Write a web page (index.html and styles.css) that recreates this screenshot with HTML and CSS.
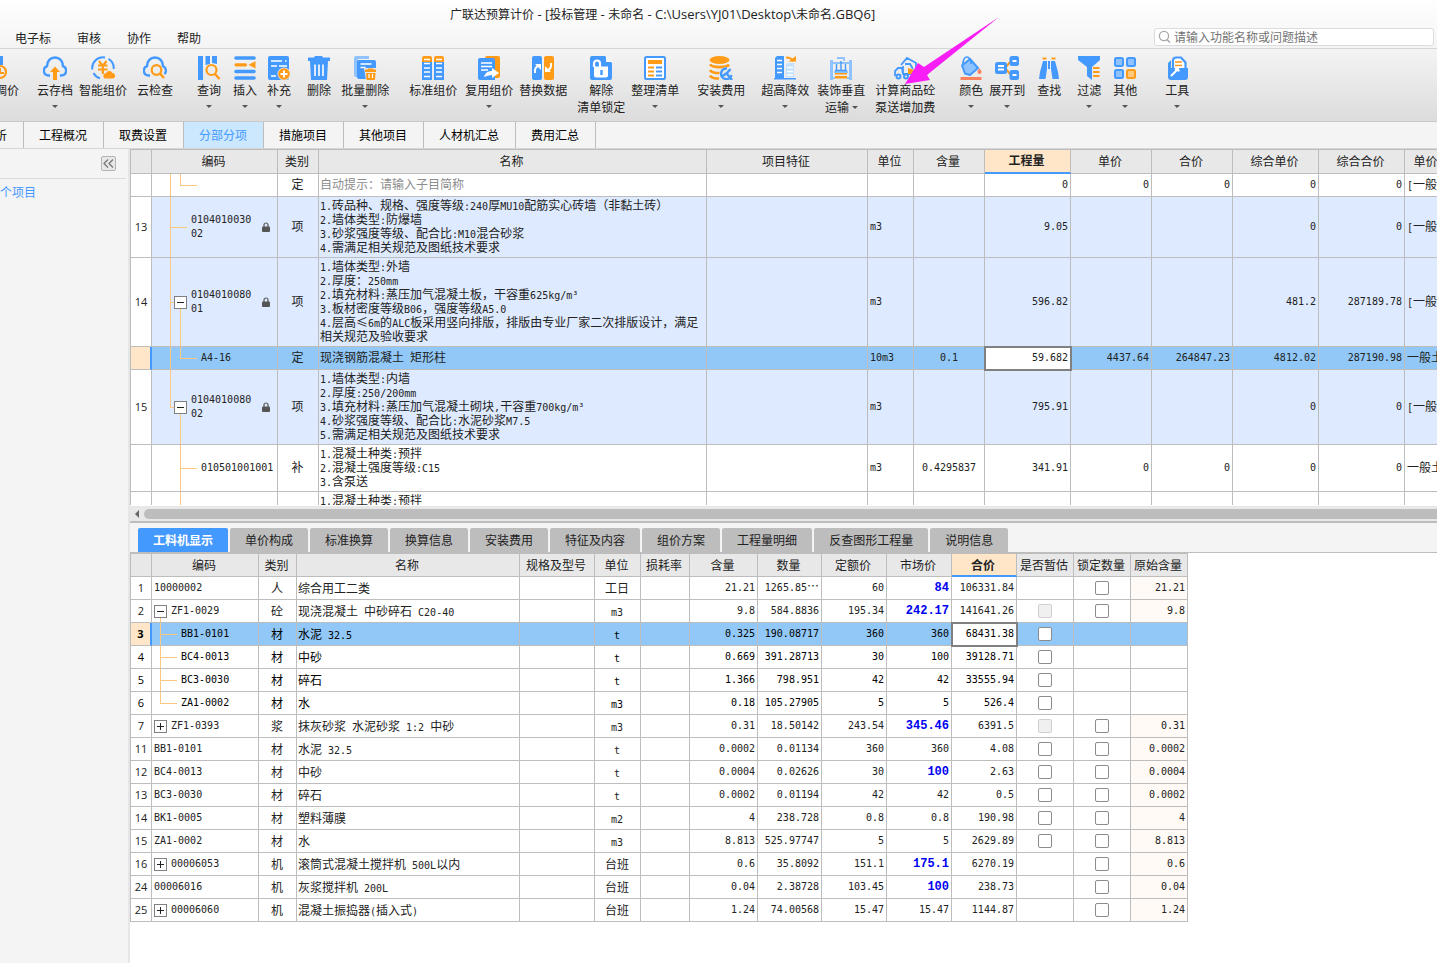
FILE: index.html
```html
<!DOCTYPE html>
<html lang="zh-CN">
<head>
<meta charset="utf-8">
<title>广联达预算计价</title>
<link rel="stylesheet" href="styles.css">
</head>
<body>
<header class="top">
  <h1 class="title">广联达预算计价<span> - [</span>投标管理<span> - </span>未命名<span> - C:\Users\YJ01\Desktop\</span>未命名<span>.GBQ6]</span></h1>
  <div class="menubar">
    <nav class="menu">
      <button>电子标</button><button>审核</button><button>协作</button><button>帮助</button>
    </nav>
    <label class="search">
      <svg width="14" height="14" viewBox="0 0 14 14"><circle cx="6" cy="6" r="4.6" fill="none" stroke="#a8a8a8" stroke-width="1.3"/><path d="M9 9.5 12 12.5" stroke="#a8a8a8" stroke-width="1.6"/></svg>
      <input type="text" aria-label="搜索" placeholder="请输入功能名称或问题描述">
    </label>
  </div>
</header>

<div class="toolbar">
  <button class="tool tool-cut"><svg viewBox="0 0 24 24"><path class="fb" d="M2 0h18v9H2zM2 11h12v12H2z"/><circle class="so" cx="17" cy="16" r="6" stroke-width="2.2"/><path class="so" d="M17 12v5h4" stroke-width="2"/></svg><span>统一调价</span></button>
  <button class="tool g18"><svg viewBox="0 0 24 24"><path class="sb" d="M7 19.500H5.500A4.800 4.800 0 0 1 4 10.200C4 5 7.500 1.500 12 1.500S20 5 20 10.200A4.800 4.800 0 0 1 18.500 19.500H17" stroke-width="2.400"/><path class="fo" d="M12 10.500l5 5.500h-3v8h-4v-8H7z"/></svg><span>云存档</span><i class="drop"></i></button>
  <button class="tool g6"><svg viewBox="0 0 24 24"><path class="sb" d="M9 22.300A10.800 10.800 0 0 1 2.500 17M1.300 13.500A10.800 10.800 0 0 1 14 1.500M17.500 2.800A10.800 10.800 0 0 1 22.700 13" stroke-width="2"/><path class="so" d="M8 5l3.800 5L15.500 5M7 9.500h9.500M7 13.500h9.500M11.800 9.500V18" stroke-width="2.200"/><path class="fo" d="M15 22.500a2.600 2.600 0 0 1 0-5.200 3.600 3.600 0 0 1 6.500-.3 2.800 2.800 0 0 1 .5 5.500z"/></svg><span>智能组价</span></button>
  <button class="tool g10"><svg viewBox="0 0 24 24"><path class="sb" d="M7 19.500H5.500A4.800 4.800 0 0 1 4 10.200C4 5 7.500 1.500 12 1.500S20 5 20 10.200A4.800 4.800 0 0 1 21.500 18" stroke-width="2.400"/><circle class="so" cx="13.500" cy="14" r="4.800" stroke-width="2.200"/><path class="so" d="M17 17.500l4 4.500" stroke-width="2.600"/></svg><span>云检查</span></button>
  <button class="tool g24"><svg viewBox="0 0 24 24"><path class="fb" d="M1 0h5v24H1zM8.500 0h4.500v8L8.500 9zM15 0h5v8l-5-1z"/><circle class="so" cx="14.500" cy="14" r="5" stroke-width="2.200"/><path class="so" d="M18 18l4.500 5" stroke-width="2.600"/></svg><span>查询</span><i class="drop"></i></button>
  <button class="tool g12"><svg viewBox="0 0 24 24"><path class="sb" stroke-linecap="round" d="M3 2h18M3 15.500h18M3 22h18" stroke-width="3.600"/><path class="so" stroke-linecap="round" d="M3 8.800h9.500" stroke-width="3.200"/><path class="fo" d="M15.500 8.800l7-3.600v7.200z"/></svg><span>插入</span><i class="drop"></i></button>
  <button class="tool g10"><svg viewBox="0 0 24 24"><rect class="fb" x="1" width="21" height="24" rx="2"/><path class="sw" d="M4 5h11M18 5h1.500M4 10h6M12 10h8M4 20h5" stroke-width="1.500"/><circle cx="17" cy="18" r="6.500" fill="#e8e8e8"/><circle class="fo" cx="17" cy="18" r="5.800"/><path class="sw" d="M17 14.500v7M13.500 18h7" stroke-width="2"/></svg><span>补充</span><i class="drop"></i></button>
  <button class="tool g16"><svg viewBox="0 0 24 24"><path class="fb" d="M8 0h7l1 1.500h7V5H1V1.500h6zM3 5h18l-1 19H4z"/><path class="sw" d="M8 8.500V20M12 8.500V20M16 8.500V20" stroke-width="1.600"/></svg><span>删除</span></button>
  <button class="tool g10"><svg viewBox="0 0 24 24"><path d="M1 2a2 2 0 0 1 2-2h13v3H5v18H3a2 2 0 0 1-2-2z" fill="#8fc3ff"/><rect class="fb" x="4" y="4" width="19" height="19" rx="2"/><path class="sw" d="M7.500 8h11M7.500 11.500h5" stroke-width="1.500"/><path fill="#eaeaea" d="M11 12h13v12H13z"/><path class="fo" d="M15 12.500h5l.5 1H23V16H12v-2.500h2.500zM13 17h9.500L22 24h-8.500z"/><path class="sw" d="M16 18v4M19.500 18v4" stroke-width="1.200"/></svg><span>批量删除</span><i class="drop"></i></button>
  <button class="tool g20"><svg viewBox="0 0 24 24"><path class="fb" d="M1 5h10v19H1zM13 5h10v19H13z"/><path class="fo" d="M1 2a2 2 0 0 1 2-2h6a2 2 0 0 1 2 2v4H1zM13 2a2 2 0 0 1 2-2h6a2 2 0 0 1 2 2v4H13z"/><path class="sw" d="M3 3.500h6M3 7.500h6M3 12h6M3 16h6M3 20.500h6M15 3.500h6M15 7.500h6M15 12h6M15 16h6M15 20.500h6" stroke-width="1.500"/></svg><span>标准组价</span></button>
  <button class="tool g8"><svg viewBox="0 0 24 24"><rect class="fo" x="8" width="15" height="22" rx="2"/><path class="fb" d="M1 4a2 2 0 0 1 2-2h13a2 2 0 0 1 2 2v20H3a2 2 0 0 1-2-2z"/><path class="sw" d="M4 7h11M4 10.500h11M4 14h7" stroke-width="1.500"/><path fill="#fff" d="M7 21c1-4 4-6 8-6v-3l7 5-7 5v-3c-3 0-5 1-8 2z"/></svg><span>复用组价</span><i class="drop"></i></button>
  <button class="tool g6"><svg viewBox="0 0 24 24"><rect class="fb" x="1" width="10" height="24" rx="2"/><rect class="fo" x="13" width="10" height="24" rx="2"/><path class="sw" d="M4 17c-.5-4 .5-6 3-7M20 7c.5 4-.5 6-3 7" stroke-width="2"/><path fill="#fff" d="M4 8h6v6zM20 16h-6v-6z"/></svg><span>替换数据</span></button>
  <button class="tool g10"><svg viewBox="0 0 24 24"><path class="fb" d="M1 2a2 2 0 0 1 2-2h13l7 7v15a2 2 0 0 1-2 2H3a2 2 0 0 1-2-2z"/><path fill="#f8f8f8" d="M17 0v6h6z"/><path class="sw" d="M5 11V7.500a3 3 0 0 1 6 0V11" stroke-width="2.200"/><path fill="#fff" d="M5 10.500h14v9a2 2 0 0 1-2 2H7a2 2 0 0 1-2-2z"/><path class="sb" d="M12.500 14v5" stroke-width="2.400"/></svg><span>解除<br>清单锁定</span></button>
  <button class="tool g6"><svg viewBox="0 0 24 24"><rect x="2" y="1" width="20" height="22" rx="1.500" fill="#fff" stroke="#4499ff" stroke-width="2"/><path class="fo" d="M5 4h14v4H5z"/><path class="so" d="M5 11.500h6M5 15.500h6M5 19.500h6" stroke-width="2"/><path class="sb" d="M13 11.500h6M13 15.500h6M13 19.500h6" stroke-width="2"/></svg><span>整理清单</span><i class="drop"></i></button>
  <button class="tool g18"><svg viewBox="0 0 24 24"><ellipse class="fo" cx="10.500" cy="4" rx="10" ry="4"/><path class="so" d="M1 8.500c2 3.500 17 3.500 19 0M1 14c1 2 5 3 10 3M1 19.500c1 2 4 3 9 3" stroke-width="2.600"/><circle cx="17" cy="18" r="6.800" fill="#e8e8e8"/><path class="sb" d="M18 12.500a5.300 5.300 0 1 0 4.500 6.500M12 21l6-4 3.500-4" stroke-width="2.400"/><path class="sb" d="M18 18l5 6" stroke-width="2.400"/></svg><span>安装费用</span><i class="drop"></i></button>
  <button class="tool g16"><svg viewBox="0 0 24 24"><path class="fb" d="M2 2l2-2h7v22h12v1.500H1V22h1z"/><path class="sw" d="M4 4.500h5M4 8.500h5M4 12.500h5M4 16.500h5" stroke-width="1.400"/><path fill="#c4e2ff" d="M13 9l2-2h6v14h-8z"/><path class="sw" d="M14 11.500h6M14 15.500h6M14 19h6" stroke-width="1.300"/><path class="so" d="M13 1.500c4 0 6 1 7 4" stroke-width="2.200"/><path class="fo" d="M15.500 5.500H23V0z"/></svg><span>超高降效</span><i class="drop"></i></button>
  <button class="tool g8"><svg viewBox="0 0 24 24"><path d="M2.500 24V4M21.500 24V4" fill="none" stroke="#8fc3ff" stroke-width="3"/><path d="M8 2h7v3M2 7h20M2 22h4M18 22h4M5 16h14" fill="none" stroke="#8fc3ff" stroke-width="1.800"/><path class="sb" d="M6 14.500h12M7.500 8v7M12 5v10M16.500 8v7" stroke-width="1.400"/><path class="fo" d="M6 17h12v1.500H6zM6 20h12v2.500H6z"/></svg><span>装饰垂直<br>运输 <i class="drop inline"></i></span></button>
  <button class="tool g10"><svg viewBox="0 0 24 24"><path class="sb" d="M2 20v-5l3-3h4l1 6M8 9l6-7 9 5v10M10 10v8h12M12 8h5l3 5" stroke-width="1.800"/><circle class="sb" cx="5.500" cy="20.500" r="2" stroke-width="2"/><circle class="sb" cx="13" cy="20.500" r="2" stroke-width="2"/><path class="fo" d="M15 12l6 2v4h-6z"/></svg><span>计算商品砼<br>泵送增加费</span></button>
  <button class="tool g24"><svg viewBox="0 0 24 24"><path d="M3 9.500l8-6.500 8 9-8 7-5-1.500z" fill="#8fc3ff" stroke="#4499ff" stroke-width="2" stroke-linejoin="round"/><path class="sb" d="M4 8c0-5 2-7 4-7s4 3 4 7" stroke-width="1.700"/><path fill="#fa8160" d="M20.500 12l2 4h-4zM1.500 21h21v3h-21z"/><circle cx="20.500" cy="16" r="2" fill="#fa8160"/></svg><span>颜色</span><i class="drop"></i></button>
  <button class="tool g6"><svg viewBox="0 0 24 24"><path class="so" d="M10 12l6-7M10 12l6 7" stroke-width="2"/><rect class="fb" x="0" y="6" width="12" height="12" rx="2.500"/><rect class="fb" x="14.500" width="9.500" height="10" rx="2.500"/><rect class="fb" x="14.500" y="14" width="9.500" height="10" rx="2.500"/><path class="sw" d="M3 10h6M3 13.500h6M17.500 5h4M17.500 19h4" stroke-width="1.900"/></svg><span>展开到</span><i class="drop"></i></button>
  <button class="tool g12"><svg viewBox="0 0 24 24"><path class="fb" d="M6 5h4v8l-1.500 10H2l1-7zM14 5h4l3 11 1 7h-6.500L14 13zM11 5h2v8h-2z"/><path class="so" d="M5.500 2.500h4M14.500 2.500h4" stroke-width="2.200"/></svg><span>查找</span></button>
  <button class="tool g16"><svg viewBox="0 0 24 24"><path class="fb" d="M1 0h22v4l-8 7v13l-5-4v-9L1 4z"/><path class="so" d="M16 12h6.500M16 16h6.500M16 20h6.500" stroke-width="1.800"/></svg><span>过滤</span><i class="drop"></i></button>
  <button class="tool g12"><svg viewBox="0 0 24 24"><g fill="#8fc3ff" stroke="#4499ff" stroke-width="2"><rect x="2" y="2" width="8" height="8" rx="1.500"/><rect x="14" y="2" width="8" height="8" rx="1.500"/><rect x="2" y="14" width="8" height="8" rx="1.500"/></g><rect x="14" y="14" width="8" height="8" rx="1.500" fill="#ffca80" stroke="#ff9b17" stroke-width="2"/></svg><span>其他</span><i class="drop"></i></button>
  <button class="tool g28"><svg viewBox="0 0 24 24"><path d="M8 18V4.500a3 3 0 0 1 3-3h5l4.500 5V15z" fill="#fff" stroke="#4499ff" stroke-width="2.200"/><path class="fb" d="M3 7l3-3v8h17v9a3 3 0 0 1-3 3H6a3 3 0 0 1-3-3z"/><path class="so" d="M10 6h7M10 9.500h7" stroke-width="1.600"/><path class="sw" d="M6 20l5-5c-1-2 1-4 2.500-3.500l-1 2.500 2 1" stroke-width="2"/></svg><span>工具</span><i class="drop"></i></button>
</div>
<svg class="pointer" width="96" height="68" viewBox="0 0 96 68"><path d="M95 0 20 50 14 46 1 67 26 63 23 58z" fill="#f91ef5"/></svg>

<nav class="tabs">
  <button class="tab-cut">造价分析</button><button>工程概况</button><button>取费设置</button><button class="on">分部分项</button><button>措施项目</button><button>其他项目</button><button>人材机汇总</button><button>费用汇总</button>
</nav>

<div class="body">
<aside class="side">
  <div class="side-head"><button class="fold" aria-label="收起"><svg width="11" height="9" viewBox="0 0 11 9"><path d="M5 .5 1 4.500l4 4M10 .5 6 4.500l4 4" fill="none" stroke="#777" stroke-width="1.300"/></svg></button></div>
  <a class="node" href="#">整个项目</a>
</aside>
<main class="main">
<div class="pane">
<table class="grid list">
<colgroup><col class="w21"><col class="w126"><col class="w41"><col class="w388"><col class="w161"><col class="w46"><col class="w71"><col class="w86"><col class="w81"><col class="w81"><col class="w86"><col class="w86"><col class="w92"></colgroup>
<thead><tr><th></th><th>编码</th><th>类别</th><th>名称</th><th>项目特征</th><th>单位</th><th>含量</th><th class="cur">工程量</th><th>单价</th><th>合价</th><th>综合单价</th><th>综合合价</th><th>单价构成文件</th></tr></thead>
<tbody>
<tr><td></td><td class="tr-a"></td><td>定</td><td class="hint">自动提示：请输入子目简称</td><td></td><td></td><td></td><td>0</td><td>0</td><td>0</td><td>0</td><td>0</td><td><b>[</b>一般土建工程<b>]</b></td></tr>
<tr class="item"><td>13</td><td class="tr-b"><div class="code deep"><span>010401003002</span><svg class="lock" viewBox="0 0 8 10"><path d="M2 5V3a2 2 0 0 1 4 0v2" fill="none" stroke="#555" stroke-width="1.200"/><rect y="4.500" width="8" height="5.500" rx="1" fill="#555"/></svg></div></td><td>项</td><td><b>1.</b>砖品种、规格、强度等级<b>:240</b>厚<b>MU10</b>配筋实心砖墙（非黏土砖）<br><b>2.</b>墙体类型<b>:</b>防爆墙<br><b>3.</b>砂浆强度等级、配合比<b>:M10</b>混合砂浆<br><b>4.</b>需满足相关规范及图纸技术要求</td><td></td><td>m3</td><td></td><td>9.05</td><td></td><td></td><td>0</td><td>0</td><td><b>[</b>一般土建工程<b>]</b></td></tr>
<tr class="item"><td>14</td><td class="tr-c"><div class="code"><button class="tog" aria-label="折叠"></button><span>010401008001</span><svg class="lock" viewBox="0 0 8 10"><path d="M2 5V3a2 2 0 0 1 4 0v2" fill="none" stroke="#555" stroke-width="1.200"/><rect y="4.500" width="8" height="5.500" rx="1" fill="#555"/></svg></div></td><td>项</td><td><b>1.</b>墙体类型<b>:</b>外墙<br><b>2.</b>厚度：<b>250mm</b><br><b>2.</b>填充材料<b>:</b>蒸压加气混凝土板，干容重<b>625kg/m³</b><br><b>3.</b>板材密度等级<b>B06</b>，强度等级<b>A5.0</b><br><b>4.</b>层高≤<b>6m</b>的<b>ALC</b>板采用竖向排版，排版由专业厂家二次排版设计，满足<br>相关规范及验收要求</td><td></td><td>m3</td><td></td><td>596.82</td><td></td><td></td><td>481.2</td><td>287189.78</td><td><b>[</b>一般土建工程<b>]</b></td></tr>
<tr class="sel"><td></td><td class="tr-a"><div class="leaf">A4-16</div></td><td>定</td><td>现浇钢筋混凝土<b> </b>矩形柱</td><td></td><td>10m3</td><td>0.1</td><td class="edit">59.682</td><td>4437.64</td><td>264847.23</td><td>4812.02</td><td>287190.98</td><td>一般土建工程</td></tr>
<tr class="item"><td>15</td><td class="tr-d"><div class="code"><button class="tog" aria-label="折叠"></button><span>010401008002</span><svg class="lock" viewBox="0 0 8 10"><path d="M2 5V3a2 2 0 0 1 4 0v2" fill="none" stroke="#555" stroke-width="1.200"/><rect y="4.500" width="8" height="5.500" rx="1" fill="#555"/></svg></div></td><td>项</td><td><b>1.</b>墙体类型<b>:</b>内墙<br><b>2.</b>厚度<b>:250/200mm</b><br><b>3.</b>填充材料<b>:</b>蒸压加气混凝土砌块<b>,</b>干容重<b>700kg/m³</b><br><b>4.</b>砂浆强度等级、配合比<b>:</b>水泥砂浆<b>M7.5</b><br><b>5.</b>需满足相关规范及图纸技术要求</td><td></td><td>m3</td><td></td><td>795.91</td><td></td><td></td><td>0</td><td>0</td><td><b>[</b>一般土建工程<b>]</b></td></tr>
<tr><td></td><td class="tr-e"><div class="leaf">010501001001</div></td><td>补</td><td><b>1.</b>混凝土种类<b>:</b>预拌<br><b>2.</b>混凝土强度等级<b>:C15</b><br><b>3.</b>含泵送</td><td></td><td>m3</td><td>0.4295837</td><td>341.91</td><td>0</td><td>0</td><td>0</td><td>0</td><td>一般土建工程</td></tr>
<tr><td></td><td class="tr-e"></td><td></td><td><b>1.</b>混凝土种类<b>:</b>预拌<br><b>2.</b>混凝土强度等级<b>:C30</b></td><td></td><td></td><td></td><td></td><td></td><td></td><td></td><td></td><td></td></tr>
</tbody>
</table>
</div>
<div class="hbar"><i class="arrow"></i><i class="thumb"></i></div>
<nav class="subtabs">
  <button class="on">工料机显示</button><button>单价构成</button><button>标准换算</button><button>换算信息</button><button>安装费用</button><button>特征及内容</button><button>组价方案</button><button>工程量明细</button><button>反查图形工程量</button><button>说明信息</button>
</nav>
<table class="grid detail">
<colgroup><col class="w21"><col class="w107"><col class="w38"><col class="w223"><col class="w75"><col class="w46"><col class="w49"><col class="w68"><col class="w64"><col class="w65"><col class="w65"><col class="w65"><col class="w57"><col class="w57"><col class="w57"></colgroup>
<thead><tr><th></th><th>编码</th><th>类别</th><th>名称</th><th>规格及型号</th><th>单位</th><th>损耗率</th><th>含量</th><th>数量</th><th>定额价</th><th>市场价</th><th class="cur">合价</th><th>是否暂估</th><th>锁定数量</th><th>原始含量</th></tr></thead>
<tbody>
<tr><td>1</td><td>10000002</td><td>人</td><td>综合用工二类</td><td></td><td>工日</td><td></td><td>21.21</td><td>1265.85<span class="dots">…</span></td><td>60</td><td class="mod">84</td><td>106331.84</td><td></td><td><input type="checkbox" aria-label="锁定数量"></td><td>21.21</td></tr>
<tr><td>2</td><td class="tr-f"><div class="code"><button class="tog" aria-label="折叠"></button>ZF1-0029</div></td><td>砼</td><td>现浇混凝土<b> </b>中砂碎石<b> C20-40</b></td><td></td><td><b>m3</b></td><td></td><td>9.8</td><td>584.8836</td><td>195.34</td><td class="mod">242.17</td><td>141641.26</td><td><input type="checkbox" aria-label="是否暂估" disabled></td><td><input type="checkbox" aria-label="锁定数量"></td><td>9.8</td></tr>
<tr class="sel child"><td>3</td><td class="tr-g"><div class="leaf">BB1-0101</div></td><td>材</td><td>水泥<b> 32.5</b></td><td></td><td><b>t</b></td><td></td><td>0.325</td><td>190.08717</td><td>360</td><td>360</td><td class="edit">68431.38</td><td><input type="checkbox" aria-label="是否暂估"></td><td></td><td></td></tr>
<tr class="child"><td>4</td><td class="tr-g"><div class="leaf">BC4-0013</div></td><td>材</td><td>中砂</td><td></td><td><b>t</b></td><td></td><td>0.669</td><td>391.28713</td><td>30</td><td>100</td><td>39128.71</td><td><input type="checkbox" aria-label="是否暂估"></td><td></td><td></td></tr>
<tr class="child"><td>5</td><td class="tr-g"><div class="leaf">BC3-0030</div></td><td>材</td><td>碎石</td><td></td><td><b>t</b></td><td></td><td>1.366</td><td>798.951</td><td>42</td><td>42</td><td>33555.94</td><td><input type="checkbox" aria-label="是否暂估"></td><td></td><td></td></tr>
<tr class="child"><td>6</td><td class="tr-h"><div class="leaf">ZA1-0002</div></td><td>材</td><td>水</td><td></td><td><b>m3</b></td><td></td><td>0.18</td><td>105.27905</td><td>5</td><td>5</td><td>526.4</td><td><input type="checkbox" aria-label="是否暂估"></td><td></td><td></td></tr>
<tr><td>7</td><td><div class="code"><button class="tog plus" aria-label="展开"></button>ZF1-0393</div></td><td>浆</td><td>抹灰砂浆<b> </b>水泥砂浆<b> 1:2 </b>中砂</td><td></td><td><b>m3</b></td><td></td><td>0.31</td><td>18.50142</td><td>243.54</td><td class="mod">345.46</td><td>6391.5</td><td><input type="checkbox" aria-label="是否暂估" disabled></td><td><input type="checkbox" aria-label="锁定数量"></td><td>0.31</td></tr>
<tr><td>11</td><td>BB1-0101</td><td>材</td><td>水泥<b> 32.5</b></td><td></td><td><b>t</b></td><td></td><td>0.0002</td><td>0.01134</td><td>360</td><td>360</td><td>4.08</td><td><input type="checkbox" aria-label="是否暂估"></td><td><input type="checkbox" aria-label="锁定数量"></td><td>0.0002</td></tr>
<tr><td>12</td><td>BC4-0013</td><td>材</td><td>中砂</td><td></td><td><b>t</b></td><td></td><td>0.0004</td><td>0.02626</td><td>30</td><td class="mod">100</td><td>2.63</td><td><input type="checkbox" aria-label="是否暂估"></td><td><input type="checkbox" aria-label="锁定数量"></td><td>0.0004</td></tr>
<tr><td>13</td><td>BC3-0030</td><td>材</td><td>碎石</td><td></td><td><b>t</b></td><td></td><td>0.0002</td><td>0.01194</td><td>42</td><td>42</td><td>0.5</td><td><input type="checkbox" aria-label="是否暂估"></td><td><input type="checkbox" aria-label="锁定数量"></td><td>0.0002</td></tr>
<tr><td>14</td><td>BK1-0005</td><td>材</td><td>塑料薄膜</td><td></td><td><b>m2</b></td><td></td><td>4</td><td>238.728</td><td>0.8</td><td>0.8</td><td>190.98</td><td><input type="checkbox" aria-label="是否暂估"></td><td><input type="checkbox" aria-label="锁定数量"></td><td>4</td></tr>
<tr><td>15</td><td>ZA1-0002</td><td>材</td><td>水</td><td></td><td><b>m3</b></td><td></td><td>8.813</td><td>525.97747</td><td>5</td><td>5</td><td>2629.89</td><td><input type="checkbox" aria-label="是否暂估"></td><td><input type="checkbox" aria-label="锁定数量"></td><td>8.813</td></tr>
<tr><td>16</td><td><div class="code"><button class="tog plus" aria-label="展开"></button>00006053</div></td><td>机</td><td>滚筒式混凝土搅拌机<b> 500L</b>以内</td><td></td><td>台班</td><td></td><td>0.6</td><td>35.8092</td><td>151.1</td><td class="mod">175.1</td><td>6270.19</td><td></td><td><input type="checkbox" aria-label="锁定数量"></td><td>0.6</td></tr>
<tr><td>24</td><td>00006016</td><td>机</td><td>灰浆搅拌机<b> 200L</b></td><td></td><td>台班</td><td></td><td>0.04</td><td>2.38728</td><td>103.45</td><td class="mod">100</td><td>238.73</td><td></td><td><input type="checkbox" aria-label="锁定数量"></td><td>0.04</td></tr>
<tr><td>25</td><td><div class="code"><button class="tog plus" aria-label="展开"></button>00006060</div></td><td>机</td><td>混凝土振捣器<b>(</b>插入式<b>)</b></td><td></td><td>台班</td><td></td><td>1.24</td><td>74.00568</td><td>15.47</td><td>15.47</td><td>1144.87</td><td></td><td><input type="checkbox" aria-label="锁定数量"></td><td>1.24</td></tr>
</tbody>
</table>
</main>
</div>
</body>
</html>
```

FILE: styles.css
```css
:root {
  --blue: #4499ff;
  --orange: #ff9b17;
  --line: #bdbdbd;
  --tree: #ffc880;
  --pane: #f4f4f4;
  --peach: #ffe6c8;
  --cjk: "Noto Sans CJK SC", sans-serif;
  --mono: "DejaVu Sans Mono", "Noto Sans CJK SC", monospace;
}

* { box-sizing: border-box; }

body {
  margin: 0;
  min-height: 100vh;
  display: flex;
  flex-direction: column;
  position: relative;
  overflow: hidden;
  background: #fff;
  color: #222;
  font: 12px/16px var(--cjk);
}

button {
  margin: 0;
  padding: 0;
  border: 0;
  background: none;
  color: inherit;
  font: inherit;
}

.fb { fill: var(--blue); }
.fo { fill: var(--orange); }
.sb { fill: none; stroke: var(--blue); }
.so { fill: none; stroke: var(--orange); }
.sw { fill: none; stroke: #fff; }

/* title and menu */
.top {
  background: linear-gradient(#fff, var(--pane));
  border-bottom: 1px solid #d6d6d6;
}
.title {
  margin: 0;
  height: 28px;
  padding-left: 450px;
  font: 12px/28px var(--cjk);
  white-space: nowrap;
}
.title span { font: 13px/16px "Open Sans", sans-serif; white-space: pre; }
.menubar {
  display: flex;
  justify-content: space-between;
  height: 20px;
  padding: 0 3px 0 15px;
}
.menu { display: flex; gap: 26px; line-height: 20px; }
.search {
  display: flex;
  align-items: center;
  gap: 2px;
  width: 280px;
  height: 18px;
  padding-left: 3px;
  border: 1px solid #dcdcdc;
  border-radius: 3px;
  background: #fff;
}
.search input {
  flex: 1;
  min-width: 0;
  height: 16px;
  padding: 0;
  border: 0;
  outline: 0;
  background: none;
  font: 12px/16px var(--cjk);
}
.search input::placeholder { color: #757575; opacity: 1; }

/* toolbar */
.toolbar {
  display: flex;
  align-items: flex-start;
  height: 73px;
  padding-top: 7px;
  background: linear-gradient(#f4f4f4, #dcdcdc);
  border-bottom: 1px solid #c8c8c8;
}
.tool {
  flex: none;
  display: flex;
  flex-direction: column;
  align-items: center;
  line-height: 17px;
  white-space: nowrap;
}
.tool svg { width: 24px; height: 24px; margin-bottom: 1px; }
.tool-cut { margin-left: -29px; }
.drop {
  margin-top: 7px;
  border: 3px solid transparent;
  border-top-color: #555;
  border-bottom: 0;
}
.drop.inline { display: inline-block; margin: 0 0 3px; }
.g6 { margin-left: 6px; }
.g8 { margin-left: 8px; }
.g10 { margin-left: 10px; }
.g12 { margin-left: 12px; }
.g16 { margin-left: 16px; }
.g18 { margin-left: 18px; }
.g20 { margin-left: 20px; }
.g24 { margin-left: 24px; }
.g28 { margin-left: 28px; }
.pointer { position: absolute; left: 904px; top: 17px; pointer-events: none; }

/* page tabs */
.tabs {
  display: flex;
  height: 27px;
  background: var(--pane);
  border-bottom: 1px solid #d6d6d6;
  color: #000;
}
.tabs button {
  flex: none;
  padding: 0 16px 0 15px;
  border-right: 1px solid var(--line);
  line-height: 26px;
}
.tabs .tab-cut { margin-left: -56px; }
.tabs .on { background: #cce8ff; color: var(--blue); }

.body { flex: 1; display: flex; }
.side {
  flex: none;
  width: 130px;
  background: var(--pane);
  border-right: 2px solid #e6e6e6;
  overflow: hidden;
}
.side-head {
  display: flex;
  justify-content: flex-end;
  height: 30px;
  margin-right: 2px;
  padding: 7px 10px 0 0;
  border-bottom: 1px solid #dcdcdc;
}
.fold {
  display: flex;
  align-items: center;
  justify-content: center;
  width: 15px;
  height: 15px;
  border: 1px solid #b4b4b4;
  border-radius: 2px;
  background: #e8e8e8;
}
.node {
  display: block;
  margin: 5px 0 0 -12px;
  color: var(--blue);
  text-decoration: none;
}
.main { flex: 1; min-width: 0; }

/* grids */
.pane { height: 356px; overflow: hidden; }
.grid {
  table-layout: fixed;
  width: 0;
  border-collapse: separate;
  border-spacing: 0;
  border-left: 1px solid var(--line);
  border-top: 1px solid var(--line);
  line-height: 14px;
}
.grid th,
.grid td {
  padding: 1px 2px 3px 1px;
  border-right: 1px solid var(--line);
  border-bottom: 1px solid var(--line);
  text-align: center;
  white-space: nowrap;
  overflow: hidden;
}
.grid th { background-color: #e8e8e8; font-weight: normal; padding: 0 2px 2px 0; }
.list th { height: 24px; }
.detail th, .detail td { height: 23px; padding-top: 0; padding-bottom: 1px; }
.detail th { padding-bottom: 0; }
.list td { height: 23px; }
.grid .cur {
  background-color: var(--peach);
  border-bottom: 2px solid var(--blue);
  font-weight: bold;
}
.grid td b { font: 10px/10px var(--mono); white-space: pre; }
.grid td:first-child { font: 11px/14px "Open Sans", sans-serif; padding: 0; }
.grid td:nth-child(2) { padding: 0; text-align: left; font: 10px/14px var(--mono); }
.grid td:nth-child(4) { text-align: left; }
.list td:nth-child(n+6):nth-child(-n+12) { font: 10px/14px var(--mono); padding: 2px; }
.list td:nth-child(6) { text-align: left; }
.list td:nth-child(n+8):nth-child(-n+12) { text-align: right; }
.list td:nth-child(13) { text-align: left; padding-left: 2px; }
.list .hint { color: #8c8c8c; }
.list .item td { background-color: #deeaff; }
.list .item td:first-child { background-color: #fff; }
.detail td:nth-child(2) { padding-left: 2px; }
.detail td:nth-child(n+8):nth-child(-n+12),
.detail td:nth-child(15) { text-align: right; font: 10px/14px var(--mono); }
.detail td:nth-child(13),
.detail td:nth-child(14) { padding: 0; }
.detail td:nth-child(15) { background-color: #fffaf5; }
.detail .child td { color: #000; }
.detail .child td:nth-child(15) { background-color: #fff; }
.grid .sel td,
.detail .sel td:nth-child(15) { background-color: #91c8f7; }
.grid .sel td:first-child {
  background-color: var(--peach);
  border-right: 2px solid var(--blue);
  font-weight: bold;
}
.grid .sel .edit {
  background-color: #fff;
  outline: 2px solid #808080;
  outline-offset: -1px;
}
.detail td.mod:nth-child(11) {
  color: #0000f0;
  font: bold 12px/14px "Liberation Mono", monospace;
}
.dots { font: 12px/12px var(--cjk); }

.w21 { width: 21px; } .w38 { width: 38px; } .w41 { width: 41px; }
.w46 { width: 46px; } .w49 { width: 49px; } .w57 { width: 57px; }
.w64 { width: 64px; } .w65 { width: 65px; } .w68 { width: 68px; }
.w71 { width: 71px; } .w75 { width: 75px; } .w81 { width: 81px; }
.w86 { width: 86px; } .w92 { width: 92px; } .w107 { width: 107px; }
.w126 { width: 126px; } .w161 { width: 161px; } .w223 { width: 223px; }
.w388 { width: 388px; }

/* tree column */
.code { display: flex; align-items: center; gap: 4px; padding-left: 22px; }
.code.deep { padding-left: 39px; }
.code span { width: 61px; white-space: normal; word-break: break-all; }
.lock { width: 8px; height: 10px; margin-left: 6px; }
.leaf { padding-left: 49px; }
.detail .code { padding-left: 0; }
.detail .leaf { padding-left: 27px; }
.tog {
  flex: none;
  width: 13px;
  height: 13px;
  border: 1px solid #808080;
  background: linear-gradient(#222, #222) center / 7px 1px no-repeat #fff;
}
.tog.plus {
  background:
    linear-gradient(#222, #222) center / 7px 1px no-repeat,
    linear-gradient(#222, #222) center / 1px 7px no-repeat #fff;
}
.tr-a, .tr-b, .tr-c, .tr-d, .tr-e, .tr-f, .tr-g, .tr-h {
  --ink: linear-gradient(var(--tree), var(--tree));
  background-repeat: no-repeat;
}
.tr-a {
  background-image: var(--ink), var(--ink), var(--ink);
  background-position: 18px 0, 28px 0, 28px 50%;
  background-size: 1px 100%, 1px 50%, 17px 1px;
}
.tr-b {
  background-image: var(--ink), var(--ink);
  background-position: 18px 0, 18px 50%;
  background-size: 1px 100%, 17px 1px;
}
.tr-c {
  background-image: var(--ink), var(--ink), var(--ink);
  background-position: 18px 0, 18px 50%, 28px 100%;
  background-size: 1px 100%, 5px 1px, 1px 50%;
}
.tr-d {
  background-image: var(--ink), var(--ink), var(--ink);
  background-position: 18px 0, 18px 50%, 28px 100%;
  background-size: 1px 50%, 5px 1px, 1px 50%;
}
.tr-e {
  background-image: var(--ink), var(--ink);
  background-position: 28px 0, 28px 50%;
  background-size: 1px 100%, 17px 1px;
}
.tr-f {
  background-image: var(--ink);
  background-position: 8px 100%;
  background-size: 1px 50%;
}
.tr-g {
  background-image: var(--ink), var(--ink);
  background-position: 8px 0, 8px 50%;
  background-size: 1px 100%, 17px 1px;
}
.tr-h {
  background-image: var(--ink), var(--ink);
  background-position: 8px 0, 8px 50%;
  background-size: 1px 50%, 17px 1px;
}

input[type="checkbox"] {
  appearance: none;
  display: block;
  width: 14px;
  height: 14px;
  margin: 0 auto;
  border: 1px solid #8c8c8c;
  border-radius: 2px;
  background: #fff;
}
input[type="checkbox"]:disabled { border-color: #d0d0d0; background: #f0f0f0; }

/* horizontal scroll bar */
.hbar {
  display: flex;
  align-items: center;
  gap: 5px;
  height: 18px;
  padding: 1px 0 0 5px;
  background: #e8e8e8;
  border-top: 1px solid #fff;
  border-bottom: 2px solid var(--line);
}
.arrow {
  border: 4px solid transparent;
  border-right: 4px solid #666;
  border-left: 0;
}
.thumb { flex: 1; height: 10px; border-radius: 5px 0 0 5px; background: var(--line); }

.subtabs {
  display: flex;
  gap: 2px;
  height: 30px;
  padding: 5px 0 0 8px;
  background: var(--pane);
  border-bottom: 1px solid var(--line);
}
.subtabs button {
  padding: 0 15px;
  border-radius: 2px 2px 0 0;
  background: var(--line);
  line-height: 24px;
}
.subtabs .on { background: var(--blue); color: #fff; font-weight: bold; }
```
